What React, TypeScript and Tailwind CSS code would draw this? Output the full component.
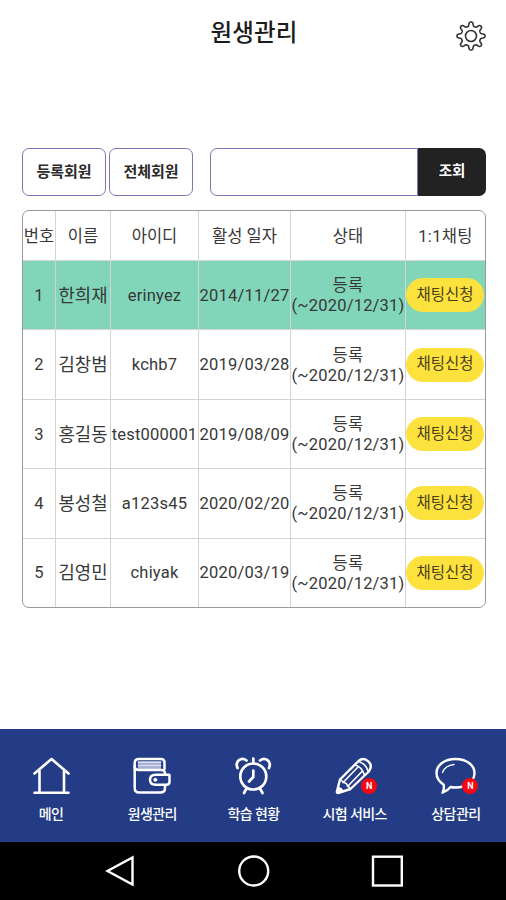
import React from "react";

const FONT = "font-[Roboto,'Noto_Sans_CJK_KR',sans-serif]";

const members = [
  { no: 1, name: "한희재", id: "erinyez", date: "2014/11/27", active: true },
  { no: 2, name: "김창범", id: "kchb7", date: "2019/03/28", active: false },
  { no: 3, name: "홍길동", id: "test000001", date: "2019/08/09", active: false },
  { no: 4, name: "봉성철", id: "a123s45", date: "2020/02/20", active: false },
  { no: 5, name: "김영민", id: "chiyak", date: "2020/03/19", active: false },
];

// Eight rounded teeth around a circle
const gearPath =
  Array.from({ length: 180 }, (_, i) => {
    const a = (i * Math.PI) / 90;
    const r = 12 + 2.2 * Math.tanh(1.8 * Math.cos(8 * a) - 0.3);
    return `${i ? "L" : "M"}${(16 + r * Math.cos(a)).toFixed(2)} ${(16 + r * Math.sin(a)).toFixed(2)}`;
  }).join("") + "Z";

function Gear() {
  return (
    <svg width="32" height="32" viewBox="0 0 32 32" fill="none" stroke="#333" strokeWidth="1.6">
      <path d={gearPath} />
      <circle cx="16" cy="16" r="5.5" />
    </svg>
  );
}

function HomeIcon() {
  return (
    <svg width="44" height="44" viewBox="0 0 44 44" fill="none" stroke="#fff" strokeWidth="2.6" strokeLinejoin="round" strokeLinecap="round">
      <path d="M5.500 20.500 22.500 6 39.500 20.500M5.500 39.700h34M10.500 18v21.500M35 18v21.500" />
    </svg>
  );
}

function WalletIcon() {
  return (
    <svg width="44" height="44" viewBox="0 0 44 44" fill="none" stroke="#fff" strokeWidth="2.5" strokeLinejoin="round" strokeLinecap="round">
      <path d="M8 8h23v8H8z" fill="#a9b2d4" stroke="none" />
      <path d="M8 9.500h23M8 12.500h23" strokeWidth="1" stroke="#dce1f2" />
      <path d="M4.700 15V10Q4.700 6 9 6H31q3.500 0 3.500 3.500V16" />
      <path d="M4.700 13q0 4 4.300 4H31q4 0 4 3.500v1M4.700 14v21q0 4.500 4.500 4.500H30.500q4.500 0 4.500-4.500V32" />
      <path d="M38.500 21.800H25.500q-5.500 0-5.500 5t5.500 5H36.500q3 0 3-3V22" />
      <circle cx="25.300" cy="26.800" r="1.500" fill="#fff" strokeWidth="1" />
    </svg>
  );
}

function ClockIcon() {
  return (
    <svg width="44" height="44" viewBox="0 0 44 44" fill="none" stroke="#fff" strokeWidth="2.700" strokeLinecap="round" strokeLinejoin="round">
      <circle cx="22.300" cy="23.500" r="13" />
      <path d="M22.300 5.700V10M22.300 17.500V24L18 28.500M15.500 35.500 13 40M29 35.500 31.500 40" />
      <path d="M6.500 15C3.500 8 10.500 3.500 15.500 7.500M38 15C41 8 34 3.500 29 7.500" />
    </svg>
  );
}

function PencilIcon() {
  return (
    <svg width="44" height="44" viewBox="0 0 44 44" fill="none" stroke="#fff" strokeWidth="2.4" strokeLinejoin="round" strokeLinecap="round">
      <path d="M6 40Q4.700 40 4.900 38.500L8 26.500 26.500 8q5-4 9.800.3t.5 10.200L18.500 36Z" />
      <path d="M22.800 12q7 1.500 9.500 10M8 26.500q2 .5 3 3 4 0 4.500 3.700 2 .5 2.800 2.500M11.500 29 25.500 14.500M16 33 30 18.500" strokeWidth="1.600" />
      <path d="M26.800 8.500Q34 11 36 18" strokeWidth="1.500" />
      <path d="m5.500 39.500 1.200-5q4 .3 4.300 4Z" fill="#fff" strokeWidth="1" />
    </svg>
  );
}

function ChatIcon() {
  return (
    <svg width="44" height="44" viewBox="0 0 44 44" fill="none" stroke="#fff" strokeWidth="2.4" strokeLinejoin="round" strokeLinecap="round">
      <path d="M22.500 6c11 0 19 6 19 14S33.500 34.500 22.500 34.500q-3 0-5-.500-3 4-8 5.700 2-4 1.200-8Q3.500 27 3.500 20C3.500 12 11.500 6 22.500 6Z" />
      <path d="M9.500 19.500Q12 12.500 21 11.500" strokeWidth="1.300" />
    </svg>
  );
}

const tabs = [
  { label: "메인", Icon: HomeIcon, isNew: false },
  { label: "원생관리", Icon: WalletIcon, isNew: false },
  { label: "학습 현황", Icon: ClockIcon, isNew: false },
  { label: "시험 서비스", Icon: PencilIcon, isNew: true },
  { label: "상담관리", Icon: ChatIcon, isNew: true },
];

const cell = "flex items-center justify-center whitespace-nowrap border-r border-[#d4d4d4]";
const cols = "grid grid-cols-[33px_55px_88px_92px_115px_1fr]";

export default function App() {
  return (
    <div className={`flex h-[900px] w-[506px] flex-col overflow-hidden bg-white text-[#383838] ${FONT}`}>
      <header className="grid h-[148px] shrink-0 grid-cols-[1fr_auto_1fr] items-start">
        <h1 className="col-start-2 pt-[16px] pl-[2px] text-[23.5px] leading-[34px] font-medium tracking-[0.1px] text-[#1c1c1c]">원생관리</h1>
        <button className="mt-[20px] mr-[19px] justify-self-end" aria-label="설정">
          <Gear />
        </button>
      </header>

      <section className="flex h-[48px] shrink-0 pr-[20px] pl-[22px] text-[15px] font-bold text-[#2a2a2a]">
        <button className="mr-[3px] w-[84px] rounded-[7px] border border-[#7779b5]">등록회원</button>
        <button className="mr-[17px] w-[84px] rounded-[7px] border border-[#7779b5]">전체회원</button>
        <div className="flex flex-1">
          <input className="min-w-0 flex-1 rounded-l-[7px] border border-[#7779b5] outline-none" />
          <button className="w-[68px] rounded-r-[7px] bg-[#222] text-[14.5px] text-white">조회</button>
        </div>
      </section>

      <section className="mt-[14px] mr-[20px] ml-[22px] flex h-[398px] shrink-0 flex-col overflow-hidden rounded-[7px] border border-[#999] text-[16.5px]">
        <div className={`${cols} h-[50px] shrink-0 border-b border-[#d4d4d4] *:pt-[3px]`}>
          <div className={cell}>번호</div>
          <div className={cell}>이름</div>
          <div className={cell}>아이디</div>
          <div className={cell}>활성 일자</div>
          <div className={cell}>상태</div>
          <div className="flex items-center justify-center tracking-[0.3px]">1:1채팅</div>
        </div>
        {members.map((m) => (
          <div key={m.no} className={`${cols} min-h-0 flex-1 border-b border-[#d4d4d4] last:border-b-0 ${m.active ? "bg-[#81d6ba]" : ""}`}>
            <div className={`${cell} pt-[2px]`}>{m.no}</div>
            <div className={`${cell} pt-[2px] text-[17.8px]`}>{m.name}</div>
            <div className={`${cell} pt-[2px] tracking-[0.2px]`}>{m.id}</div>
            <div className={`${cell} pt-[2px] tracking-[0.2px]`}>{m.date}</div>
            <div className={`${cell} flex-col pt-[2px] leading-[20px] tracking-[0.2px]`}>
              <span>등록</span>
              <span>(~2020/12/31)</span>
            </div>
            <div className="flex items-center justify-center pr-[2px]">
              <button className="h-[34px] w-[78px] rounded-full bg-[#fde13d] pt-[1px] text-[15.5px] whitespace-nowrap text-[#4a4020]">채팅신청</button>
            </div>
          </div>
        ))}
      </section>

      <nav className="mt-auto grid h-[113px] shrink-0 grid-cols-5 bg-[#243c85] pt-[24px]">
        {tabs.map(({ label, Icon, isNew }) => (
          <div key={label} className="flex flex-col items-center text-white">
            <div className="relative size-[44px]">
              <Icon />
              {isNew && (
                <span className="absolute right-[-1px] bottom-[3px] flex size-[16px] items-center justify-center rounded-full bg-[#f50612] text-[9px] leading-none font-bold">N</span>
              )}
            </div>
            <span className="mt-[7px] pl-[1px] text-[14px] leading-[20px] font-medium tracking-[-0.6px] whitespace-nowrap">{label}</span>
          </div>
        ))}
      </nav>

      <footer className="flex h-[58px] shrink-0 items-center bg-black">
        <svg width="506" height="58" viewBox="0 0 506 58" fill="none" stroke="#fff" strokeWidth="2.4">
          <path d="M132.500 15.500v27L107.500 29Z" />
          <circle cx="253.700" cy="29" r="14.500" />
          <rect x="373" y="14.700" width="28.800" height="28.800" />
        </svg>
      </footer>
    </div>
  );
}
